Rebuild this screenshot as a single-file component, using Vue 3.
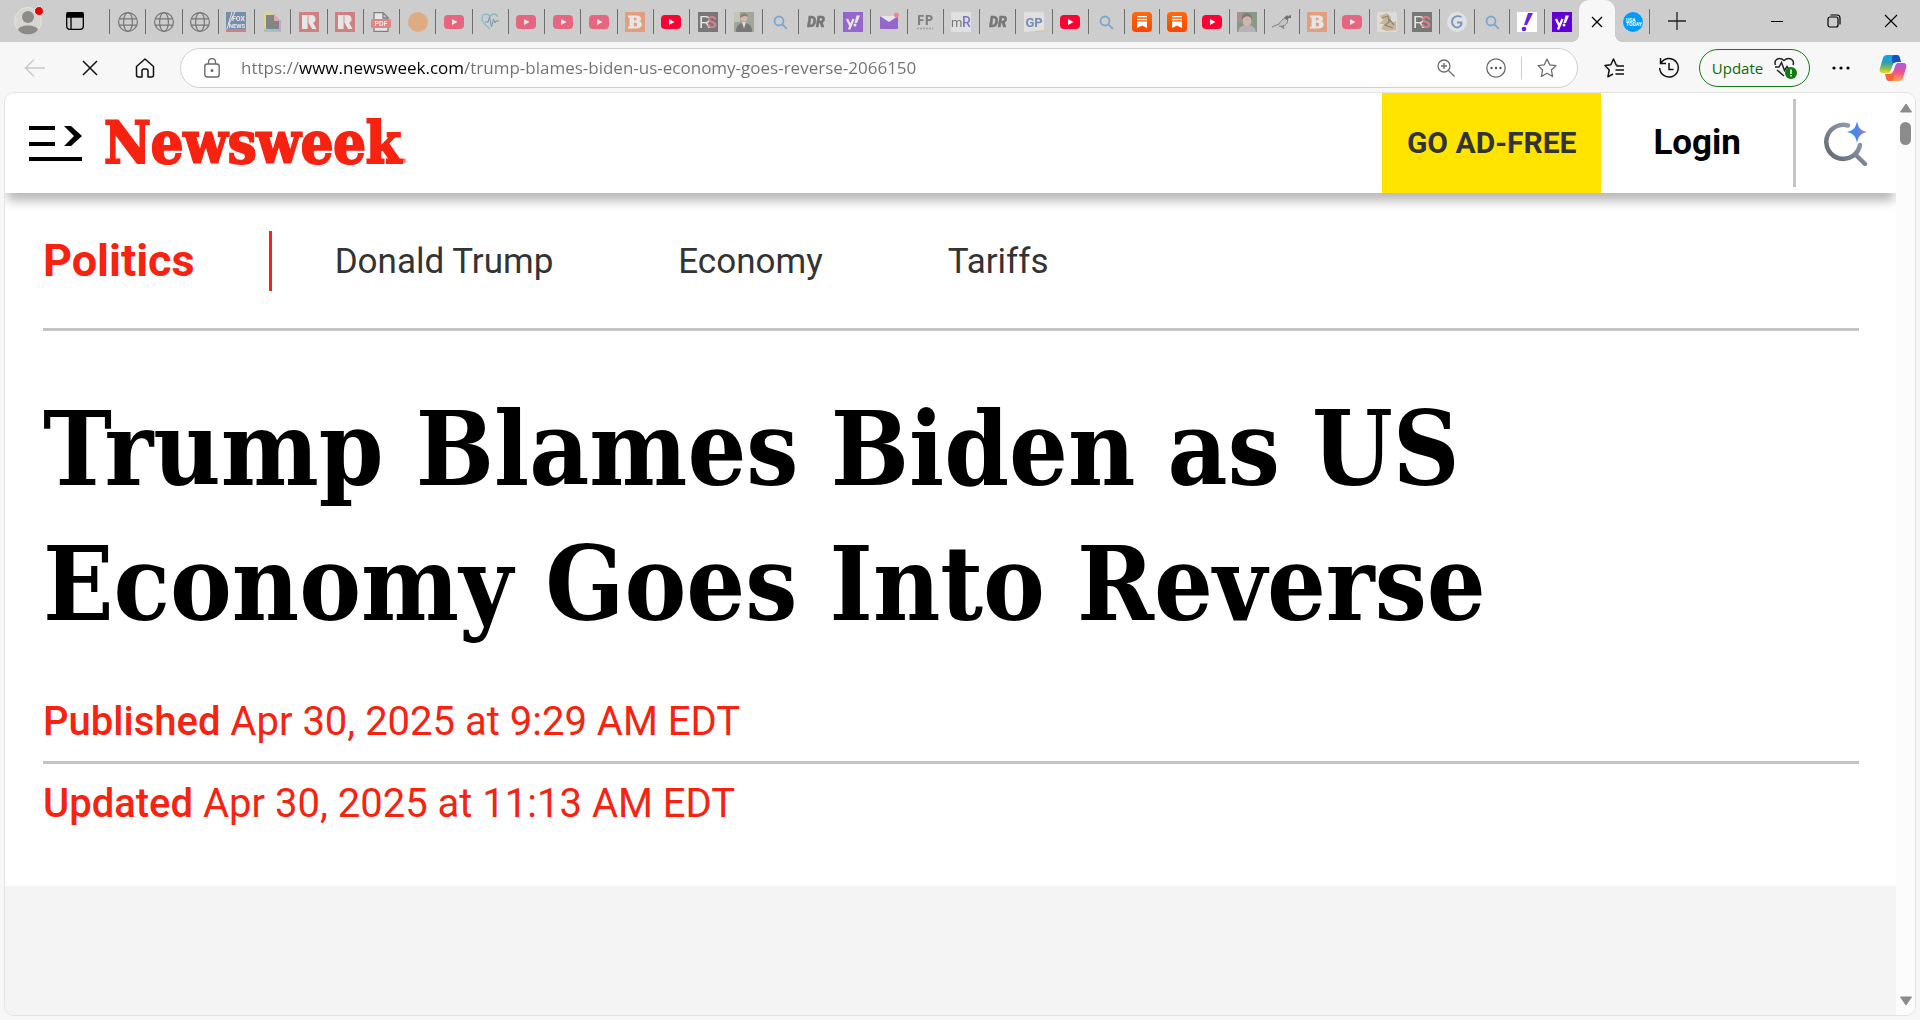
<template>
  <div class="browser">
    <!-- shared favicon shapes -->
    <svg class="sprite" aria-hidden="true">
      <defs>
        <linearGradient id="flame" x1="0" y1="0" x2="0" y2="1">
          <stop offset="0" stop-color="#ff6a0a" />
          <stop offset="1" stop-color="#fa4600" />
        </linearGradient>
        <symbol id="fav-globe" viewBox="0 0 20 20">
          <g fill="none" stroke="#222" stroke-width="1.2">
            <circle cx="10" cy="10" r="9.4" />
            <ellipse cx="10" cy="10" rx="4.4" ry="9.4" />
            <path d="M1.4 6.8h17.2M1.4 13.2h17.2" />
          </g>
        </symbol>
        <symbol id="fav-fox" viewBox="0 0 20 20">
          <path fill="#24508b" d="M0 0h20v20H0z" />
          <path fill="#d3343b" d="M0 17h20v3H0z" />
          <path d="M1 17L6 0M3 12L9 0" stroke="#fff" stroke-width="1" />
          <text x="12.5" y="9" font-size="7" font-weight="700" text-anchor="middle" fill="#fff">FOX</text>
          <text x="11" y="16" font-size="6" font-weight="700" text-anchor="middle" fill="#fff">NEWS</text>
        </symbol>
        <symbol id="fav-doc" viewBox="0 0 20 20">
          <path fill="#e6df70" d="M1 0h9v18H1z" />
          <path fill="#67bcd2" d="M1 17h17v3H1z" />
          <path fill="#b286c0" d="M15 8h3v11h-3z" />
          <path fill="#3d3d3d" d="M3 3h8l5 5v9H3z" />
          <path fill="#ed8791" d="M9 0l9 9h-7V3z" />
        </symbol>
        <symbol id="fav-realtor" viewBox="0 0 20 20">
          <path fill="#d2353b" d="M0 0h20v20H0z" />
          <path fill="#fff" d="M3 3h5.6v14H3zM9.4 3H12c3 0 4.6 1.5 4.6 4.2 0 2-1 3-2.4 3.600L17.500 17h-4.300L9.400 10.500z" />
        </symbol>
        <symbol id="fav-pdf" viewBox="0 0 20 20">
          <path d="M3 .7h9l5 5v13.600H3zM12 1v5h5" fill="#fff" stroke="#333" stroke-width="1.3" />
          <rect y="7" width="20" height="9" rx="1.5" fill="#ee3f43" />
          <text x="10" y="14" font-size="7" font-weight="700" text-anchor="middle" fill="#fff">PDF</text>
        </symbol>
        <symbol id="fav-orange" viewBox="0 0 20 20">
          <circle cx="10" cy="10" r="10" fill="#f18a3b" />
        </symbol>
        <symbol id="fav-youtube" viewBox="0 0 20 20">
          <rect y="3" width="20" height="14" rx="4" fill="#ff0033" />
          <path fill="#fff" d="M8 7l5.5 3L8 13z" />
        </symbol>
        <symbol id="fav-heart" viewBox="0 0 20 20">
          <path d="M10 17C5 13 2 10 2 6.5 2 1.5 8 .5 10 5c2-4.5 7-3.5 7.5 0" fill="none" stroke="#35aec9" stroke-width="1.3" />
          <path d="M5 10h3l1.5-5 2 10 2-8 1.5 4 1-2h3" fill="none" stroke="#2d5a80" stroke-width="1" />
        </symbol>
        <symbol id="fav-breitbart" viewBox="0 0 20 20">
          <path fill="#f9732f" d="M0 0h20v20H0z" />
          <text x="10" y="16" font-size="17" font-weight="700" font-family="DejaVu Serif, serif" text-anchor="middle" fill="#fff" stroke="#fff">B</text>
        </symbol>
        <symbol id="fav-rs" viewBox="0 0 20 20">
          <path fill="#242424" d="M0 0h20v20H0z" />
          <text x="1" y="16" font-size="17" fill="#fff" font-family="Liberation Sans, sans-serif">R</text>
          <text x="9" y="16" font-size="16" font-weight="700" fill="#e5384c">S</text>
        </symbol>
        <symbol id="fav-suit" viewBox="0 0 20 20">
          <path fill="#758363" d="M0 0h20v20H0z" />
          <path fill="#b9bfa5" d="M0 0h6v10H0z" />
          <path fill="#22262e" d="M2 20c0-6 3-9 8-9s8 3 8 9z" />
          <path fill="#e8e8e8" d="M8 10h4l-2 7z" />
          <circle cx="10" cy="6" r="3.5" fill="#d5a68d" />
          <path fill="#4a3a2c" d="M6 6c0-6 8-6 8-1-3-2-5-1-8 1z" />
        </symbol>
        <symbol id="fav-search" viewBox="0 0 20 20">
          <g fill="none" stroke="#2b82d2" stroke-width="1.8" stroke-linecap="round">
            <circle cx="9" cy="9" r="4.5" />
            <path d="M12.4 12.4l4 4" />
          </g>
        </symbol>
        <symbol id="fav-drudge" viewBox="0 0 20 20">
          <text x="10" y="15" font-size="14" font-weight="900" font-style="italic" text-anchor="middle" fill="#222" stroke="#222" stroke-width=".5">DR</text>
        </symbol>
        <symbol id="fav-yahoo" viewBox="0 0 20 20">
          <path fill="#6001d2" d="M0 0h20v20H0z" />
          <path d="M4 7l3.2 6.5M10.5 7L6 17.5" stroke="#fff" stroke-width="2.3" />
          <path fill="#fff" d="M13.5 3.5H17L14 11h-2.500z" />
          <circle cx="12" cy="13" r="1.5" fill="#fff" />
        </symbol>
        <symbol id="fav-mail" viewBox="0 0 20 20">
          <rect x="1" y="4" width="18" height="13" rx="1" fill="#6001d2" />
          <path d="M1 4l9 6 9-6" fill="#fff" />
          <circle cx="17.5" cy="3" r="2.5" fill="#ff4b4b" />
        </symbol>
        <symbol id="fav-fp" viewBox="0 0 20 20">
          <text x="10" y="13" font-size="14" font-weight="700" font-family="Open Sans, sans-serif" text-anchor="middle" fill="#333">FP</text>
          <path d="M2 16.5h16" stroke="#777" stroke-width="1.5" stroke-dasharray="2 1" />
        </symbol>
        <symbol id="fav-mr" viewBox="0 0 20 20">
          <path fill="#f4f4f4" d="M0 0h20v20H0z" />
          <text x="0" y="15" font-size="13" fill="#222">m</text>
          <text x="11" y="15" font-size="14" font-weight="500" fill="#2e21b8">R</text>
        </symbol>
        <symbol id="fav-gp" viewBox="0 0 20 20">
          <path fill="#f4f4f4" d="M0 0h20v20H0z" />
          <path fill="#eebd55" d="M3 20l17-2v2z" />
          <text x="10" y="15" font-size="13" font-weight="700" text-anchor="middle" fill="#244d9d">GP</text>
        </symbol>
        <symbol id="fav-substack" viewBox="0 0 20 20">
          <rect width="20" height="20" rx="4" fill="url(#flame)" />
          <path d="M5 4.7h10M5 7.5h10" stroke="#fff" stroke-width="1.3" />
          <path fill="#fff" d="M5 9.500h10V16l-5-2.600L5 16z" />
        </symbol>
        <symbol id="fav-portrait" viewBox="0 0 20 20">
          <path fill="#456745" d="M0 0h20v20H0z" />
          <path fill="#96504a" d="M0 0h5v10H0z" />
          <path fill="#a696a5" d="M1 20c1-5 4-7 9-7s8 2 9 7z" />
          <ellipse cx="10" cy="8.5" rx="4.5" ry="6" fill="#d69c86" />
          <path fill="#33261f" d="M5 8c-1-9 11-9 10 0-1-5-8-5-10 0z" />
        </symbol>
        <symbol id="fav-bird" viewBox="0 0 20 20">
          <path d="M0 15l7-3c2-3 4-6 7-6 2 0 2 3 1 5-2 3-5 4-8 3M8 14l3 2M11 13l1 4" fill="#bbb" stroke="#333" stroke-width="1" />
          <path fill="#111" d="M12 6l3-3 2 3-2 2zM16 4l3-1v3h-2z" />
        </symbol>
        <symbol id="fav-paper" viewBox="0 0 20 20">
          <path fill="#f0ece3" d="M0 0h20v20H0z" />
          <path fill="#c7a063" d="M3 4l7-3 4 4v6l5-2v9l-9 1-6-2 3-5H2l4-4z" />
          <path d="M5 6l6-2 1 6-4 3 8 3M12 7l5 6" fill="none" stroke="#4a4335" stroke-width="1.3" />
        </symbol>
        <symbol id="fav-g" viewBox="0 0 20 20">
          <circle cx="10" cy="10" r="10" fill="#f5f6f9" />
          <path d="M14.5 5C9 2.5 5 6 5 10s4 6.5 7 5c2-1 2.5-2.5 2.5-4.5H10" fill="none" stroke="#315fae" stroke-width="1.9" />
        </symbol>
        <symbol id="fav-bang" viewBox="0 0 20 20">
          <path fill="#fff" d="M0 0h20v20H0z" />
          <path fill="#6920ed" d="M11 1h5l-6 12H7z" />
          <circle cx="7" cy="17" r="2.3" fill="#6920ed" />
        </symbol>
        <symbol id="fav-usa" viewBox="0 0 20 20">
          <circle cx="10" cy="10" r="10" fill="#009bff" />
          <text x="3" y="9.5" font-size="5" font-weight="700" fill="#fff">USA</text>
          <text x="3" y="14" font-size="5" font-weight="700" fill="#fff">TODAY</text>
        </symbol>
      </defs>
    </svg>

    <header class="tab-strip">
      <div class="strip-left">
        <button class="profile" aria-label="Profile">
          <svg width="28" height="28" viewBox="0 0 28 28">
            <circle cx="14" cy="14" r="13.5" fill="#d6d5d2" stroke="#e2e2e0" />
            <circle cx="14" cy="10" r="6" fill="#8d8b88" />
            <path d="M4 23c1-6 19-6 20 0-5 6-15 6-20 0z" fill="#8d8b88" />
          </svg>
          <span class="alert-dot"></span>
        </button>
        <button class="tab-actions" aria-label="Tab actions">
          <svg width="18" height="18" viewBox="0 0 18 18" fill="none" stroke="#000" stroke-width="1.3">
            <rect x=".7" y=".7" width="16.6" height="16.6" rx="3" />
            <path d="M1 1h16v4H1z" fill="#000" />
            <path d="M5 5v12" />
          </svg>
        </button>
      </div>

      <nav class="tabs" aria-label="Tabs">
        <button v-for="(tab, i) in tabs" :key="i" class="tab" :class="{ asleep: tab.asleep }" :aria-label="tab.icon">
          <svg class="favicon"><use :href="'#fav-' + tab.icon" /></svg>
        </button>
      </nav>
      <nav class="tabs recent" aria-label="Recent tabs">
        <button
          v-for="(tab, i) in recentTabs"
          :key="i"
          class="tab"
          :class="{ asleep: tab.asleep }"
          :aria-label="tab.icon"
        >
          <svg class="favicon"><use :href="'#fav-' + tab.icon" /></svg>
        </button>
      </nav>
      <button class="tab-active" aria-label="Close tab">
        <svg width="12" height="12" viewBox="0 0 12 12" stroke="#000" stroke-width="1.3">
          <path d="M1 1l10 10M11 1L1 11" />
        </svg>
      </button>
      <button class="tab last" aria-label="usa">
        <svg class="favicon"><use href="#fav-usa" /></svg>
      </button>

      <button class="new-tab" aria-label="New tab">
        <svg width="18" height="18" viewBox="0 0 18 18" stroke="#222" stroke-width="1.3"><path d="M9 0v18M0 9h18" /></svg>
      </button>
      <div class="window-buttons">
        <button aria-label="Minimize">
          <svg width="14" height="14" viewBox="0 0 14 14" stroke="#000"><path d="M1 7.5h12" /></svg>
        </button>
        <button aria-label="Restore">
          <svg width="14" height="14" viewBox="0 0 14 14" fill="none" stroke="#000" stroke-width="1.2">
            <rect x="1" y="3" width="10" height="10" rx="2" />
            <path d="M3.5 1H10a3 3 0 0 1 3 3v6.5" />
          </svg>
        </button>
        <button aria-label="Close">
          <svg width="14" height="14" viewBox="0 0 14 14" stroke="#000" stroke-width="1.1"><path d="M1 1l12 12M13 1L1 13" /></svg>
        </button>
      </div>
    </header>

    <div class="toolbar">
      <button class="tool" aria-label="Back">
        <svg width="22" height="20" viewBox="0 0 22 20" fill="none" stroke="#c9c9c9" stroke-width="1.5">
          <path d="M21 10H2M10 1.5L1.5 10l8.5 8.5" />
        </svg>
      </button>
      <button class="tool" aria-label="Stop">
        <svg width="16" height="16" viewBox="0 0 16 16" stroke="#111" stroke-width="1.5"><path d="M1 1l14 14M15 1L1 15" /></svg>
      </button>
      <button class="tool" aria-label="Home">
        <svg width="20" height="20" viewBox="0 0 20 20" fill="none" stroke="#111" stroke-width="1.5" stroke-linejoin="round">
          <path d="M1.5 8.5L10 1l8.5 7.5V17a2 2 0 0 1-2 2H13v-6a2 2 0 0 0-2-2H9a2 2 0 0 0-2 2v6H3.5a2 2 0 0 1-2-2z" />
        </svg>
      </button>

      <form class="address" @submit.prevent>
        <svg width="16" height="20" viewBox="0 0 16 20" fill="none" stroke="#6b6b6b" stroke-width="1.4">
          <rect x=".8" y="6" width="14.4" height="13" rx="2.5" />
          <path d="M4.5 6V4a3.5 3.5 0 0 1 7 0v2" />
          <circle cx="8" cy="12.5" r=".8" fill="#555" />
        </svg>
        <input v-model="url" class="url" aria-label="Address" spellcheck="false" />
        <button class="in-address" type="button" aria-label="Zoom">
          <svg width="18" height="18" viewBox="0 0 18 18" fill="none" stroke="#6b6b6b" stroke-width="1.3">
            <circle cx="7" cy="7" r="6" />
            <path d="M11.5 11.5l6 6M4 7h6M7 4v6" />
          </svg>
        </button>
        <button class="in-address" type="button" aria-label="More in address bar">
          <svg width="20" height="20" viewBox="0 0 20 20" fill="none" stroke="#6b6b6b" stroke-width="1.3">
            <circle cx="10" cy="10" r="9.2" />
            <g fill="#555" stroke="none">
              <circle cx="5.5" cy="10" r="1.2" /><circle cx="10" cy="10" r="1.2" /><circle cx="14.5" cy="10" r="1.2" />
            </g>
          </svg>
        </button>
        <span class="address-sep"></span>
        <button class="in-address" type="button" aria-label="Add to favorites">
          <svg width="20" height="20" viewBox="0 0 20 20" fill="none" stroke="#6b6b6b" stroke-width="1.3" stroke-linejoin="round">
            <path d="M10 1l2.7 5.8 6.3.8-4.6 4.4 1.2 6.5L10 15.3l-5.6 3.2L5.6 12 1 7.6l6.3-.8z" />
          </svg>
        </button>
      </form>

      <button class="tool favorites" aria-label="Favorites">
        <svg width="20" height="20" viewBox="0 0 20 20" fill="none" stroke="#111" stroke-width="1.5" stroke-linejoin="round">
          <path d="M13.5 7.3l-1.3-.3L9.5 1 6.8 6.8 1 7.6 5.2 12l-1.3 6.8L9 16" />
          <path d="M12.5 8H20M11.5 12H20M11.5 16H20" />
        </svg>
      </button>
      <button class="tool" aria-label="History">
        <svg width="22" height="22" viewBox="0 0 22 22" fill="none" stroke="#111" stroke-width="1.5">
          <path d="M3 6a9.3 9.3 0 1 1-1.3 5M2.5 1v5.5H8M11 6v6.5h4.5" />
        </svg>
      </button>
      <button class="update">
        <span>Update</span>
        <svg width="24" height="24" viewBox="0 0 24 24" fill="none" stroke="#222" stroke-width="1.5">
          <path d="M2.5 9C.5 4 6 0 11 4.5 16 0 22 4 20 9M4 14l7 6" />
          <path d="M2 11h4l2.5-4.5 3 8 2.5-4 1.5 2h2" />
          <circle cx="18" cy="17" r="6" fill="#107c10" stroke="none" />
          <path d="M18 13.5V18M18 19v1.5" stroke="#fff" />
        </svg>
      </button>
      <button class="tool" aria-label="Settings and more">
        <svg width="18" height="4" viewBox="0 0 18 4"><circle cx="2" cy="2" r="1.6" /><circle cx="9" cy="2" r="1.6" /><circle cx="16" cy="2" r="1.6" /></svg>
      </button>
      <button class="copilot" aria-label="Copilot">
        <svg width="28" height="28" viewBox="0 0 28 28">
          <defs>
            <linearGradient id="cp-left" x1="0" y1="0" x2="0" y2="1">
              <stop offset="0" stop-color="#12a0ee" /><stop offset=".45" stop-color="#2c9fb0" /><stop offset=".75" stop-color="#8cc04a" /><stop offset="1" stop-color="#ffd02e" />
            </linearGradient>
            <linearGradient id="cp-right" x1="0" y1="0" x2="0" y2="1">
              <stop offset="0" stop-color="#a05cec" /><stop offset=".5" stop-color="#f0508c" /><stop offset="1" stop-color="#ffa252" />
            </linearGradient>
          </defs>
          <path d="M8 1h10l-2 3-4 12c-.6 2-1.5 3-3 3H4c-3 0-4-2-3-5L4 4c.5-2 2-3 4-3z" fill="url(#cp-left)" />
          <path d="M15 1h3c2 0 2.5 1 3 3l1 4h-4c-2 0-3 1-4 3l-1-6c0-2 .5-3.3 2-4z" fill="#174fc4" />
          <path d="M20 27H10l2-3 4-12c.6-2 1.5-3 3-3h5c3 0 4 2 3 5l-3 10c-.5 2-2 3-4 3z" fill="url(#cp-right)" />
          <path d="M13 27h-3c-2 0-2.5-1-3-3l-1-4h4c2 0 3-1 4-3l1 6c0 2-.5 3.3-2 4z" fill="#f4673a" />
          <path d="M14.5 9H18c-1.5 1-2 2.5-2.500 4L14 17c-.5 1.5-1 2.5-4 2.5 1.5-.5 2-2 2.5-3.5L14 11z" fill="#fff" />
        </svg>
      </button>
    </div>

    <div class="viewport">
      <div class="page">
        <div class="site-header">
          <button class="menu" aria-label="Menu">
            <svg width="53" height="36" viewBox="0 0 53 36" fill="#000">
              <path d="M0 1h26v4H0zM0 17h26v4H0zM0 32h53v4H0z" />
              <path d="M35 1h7l11 10-11 10h-7l10-10z" />
            </svg>
          </button>
          <a class="logo" href="#">Newsweek<sup>®</sup></a>
          <a class="ad-free" href="#">GO AD-FREE</a>
          <a class="login" href="#">Login</a>
          <button class="site-search" aria-label="Search">
            <svg width="44" height="46" viewBox="0 0 44 46" fill="none" stroke-linecap="round">
              <defs>
                <linearGradient id="lens" x1="0" y1="1" x2="1" y2="0">
                  <stop offset="0" stop-color="#59616b" /><stop offset="1" stop-color="#a0aac0" />
                </linearGradient>
                <linearGradient id="spark" x1="0" y1="0" x2="1" y2="0">
                  <stop offset="0" stop-color="#2d9bf5" /><stop offset=".5" stop-color="#4f83e6" /><stop offset="1" stop-color="#c673c8" />
                </linearGradient>
              </defs>
              <path d="M24 5.500A17 17 0 1 0 36 25M32 35l9 9" stroke="url(#lens)" stroke-width="4.5" />
              <path d="M33 1c1.5 7 3 9 10 11-7 2-8.5 4-10 11-1.5-7-3-9-10-11 7-2 8.5-4 10-11z" fill="url(#spark)" />
            </svg>
          </button>
        </div>

        <main class="article">
          <nav class="topics">
            <a class="section" href="#">Politics</a>
            <a v-for="topic in topics" :key="topic" class="topic" href="#">{{ topic }}</a>
          </nav>
          <h1>Trump Blames Biden as US Economy Goes Into Reverse</h1>
          <p class="date"><strong>Published</strong> Apr 30, 2025 at 9:29 AM EDT</p>
          <p class="date updated"><strong>Updated</strong> Apr 30, 2025 at 11:13 AM EDT</p>
        </main>
        <div class="media-slot"></div>
      </div>

      <div class="scrollbar" aria-hidden="true">
        <svg width="14" height="10" viewBox="0 0 14 10"><path d="M7 1l5.5 8h-11z" fill="#8b8b8b" stroke="#8b8b8b" stroke-linejoin="round" /></svg>
        <span class="thumb"></span>
        <svg class="down" width="14" height="10" viewBox="0 0 14 10"><path d="M7 9L1.5 1h11z" fill="#8b8b8b" stroke="#8b8b8b" stroke-linejoin="round" /></svg>
      </div>
    </div>
  </div>
</template>

<script setup>
import { ref } from "vue";

const url = ref("https://www.newsweek.com/trump-blames-biden-us-economy-goes-reverse-2066150");

const topics = ["Donald Trump", "Economy", "Tariffs"];

// "!" marks a tab that is awake, the others are drawn faded
const toTabs = (names) =>
  names.split(" ").map((name) => ({
    icon: name.replace("!", ""),
    asleep: !name.endsWith("!"),
  }));

const tabs = toTabs(
  "globe globe globe fox doc realtor realtor pdf orange youtube heart youtube youtube youtube " +
    "breitbart youtube! rs suit search drudge yahoo mail fp mr drudge gp youtube! search"
);

const recentTabs = toTabs(
  "substack! substack! youtube! portrait bird breitbart youtube paper rs g search bang! yahoo!"
);
</script>

<style>
body {
  background: #f7f7f7;
}
</style>

<style scoped>
.browser {
  display: flex;
  flex-direction: column;
  min-height: 100vh;
  box-sizing: border-box;
  padding-bottom: 4px;
  background: #f7f7f7;
  font-family: Roboto, "Liberation Sans", sans-serif;
}

.sprite {
  position: absolute;
  width: 0;
  height: 0;
}

button {
  display: flex;
  align-items: center;
  justify-content: center;
  padding: 0;
  border: 0;
  background: none;
  cursor: pointer;
}

svg {
  display: block;
  flex-shrink: 0;
}

a {
  text-decoration: none;
}

/* tab strip */
.tab-strip {
  display: flex;
  height: 42px;
  padding-right: 1px;
  background: #cdcdcd;
}

.strip-left {
  display: flex;
  align-items: center;
  gap: 24px;
  width: 95px;
  padding-left: 14px;
}

.profile {
  position: relative;
}

.alert-dot {
  position: absolute;
  top: -1px;
  right: -2px;
  width: 8px;
  height: 8px;
  border: 1px solid #e8e8e8;
  border-radius: 50%;
  background: #e60000;
}

.tabs {
  display: flex;
  flex: 1;
}

.tabs.recent {
  flex: none;
}

.tab {
  position: relative;
  flex: 1;
  padding: 2px 0 0 1px;
}

.recent .tab,
.tab.last {
  flex: none;
  width: 35px;
}

.tab::before {
  content: "";
  position: absolute;
  left: 0;
  top: 9px;
  width: 1px;
  height: 25px;
  background: #6e6e6e;
}

.tab.last::before {
  left: auto;
  right: 0;
}

.favicon {
  width: 20px;
  height: 20px;
  font-family: Roboto, sans-serif;
}

.asleep .favicon {
  opacity: 0.5;
}

.tab-active {
  position: relative;
  width: 36px;
  padding-top: 2px;
  border-radius: 10px 10px 0 0;
  background: #f7f7f7;
}

.tab-active::before,
.tab-active::after {
  content: "";
  position: absolute;
  bottom: 0;
  width: 8px;
  height: 8px;
}

.tab-active::before {
  right: 100%;
  background: radial-gradient(circle at 0 0, transparent 8px, #f7f7f7 8px);
}

.tab-active::after {
  left: 100%;
  background: radial-gradient(circle at 100% 0, transparent 8px, #f7f7f7 8px);
}

.new-tab {
  width: 54px;
}

.window-buttons {
  display: flex;
  margin-left: 44px;
}

.window-buttons button {
  width: 57px;
}

/* toolbar */
.toolbar {
  display: flex;
  align-items: center;
  height: 50px;
  padding: 2px 2px 0 7px;
  box-sizing: border-box;
}

.tool {
  width: 55px;
  height: 40px;
}

.address {
  display: flex;
  flex: 1;
  align-items: center;
  height: 40px;
  margin-left: 8px;
  padding: 0 5px 0 23px;
  box-sizing: border-box;
  border: 1px solid #cfcfcf;
  border-radius: 20px;
  background: #fff;
}

.url {
  flex: 1;
  min-width: 0;
  margin-left: 21px;
  padding: 0;
  border: 0;
  outline: 0;
  font: 17px/24px "Open Sans", "Noto Sans", sans-serif;
  color: #707070;
  /* the host part of the address is darker than the rest */
  background: linear-gradient(90deg, #707070 58px, #000 58px, #000 222px, #707070 222px);
  -webkit-background-clip: text;
  background-clip: text;
  -webkit-text-fill-color: transparent;
}

.in-address {
  width: 50px;
  height: 36px;
}

.address-sep {
  width: 1px;
  height: 22px;
  background: #cfcfcf;
}

.favorites {
  margin-left: 8px;
}

.update {
  gap: 10px;
  width: 111px;
  height: 38px;
  margin: 0 3px;
  border: 1px solid #107c10;
  border-radius: 19px;
  font: 500 15px/20px "Open Sans", "Noto Sans", sans-serif;
  color: #0b6a0b;
}

.copilot {
  width: 50px;
}

/* page */
.viewport {
  display: flex;
  flex: 1;
  margin: 0 4px;
  overflow: hidden;
  border: 1px solid #e3e3e3;
  border-radius: 10px;
  background: #fff;
}

.page {
  display: flex;
  flex: 1;
  flex-direction: column;
  overflow: hidden;
}

.site-header {
  display: flex;
  align-items: center;
  height: 100px;
  padding-left: 24px;
  background: #fff;
  box-shadow: 0 10px 10px -2px rgba(0, 0, 0, 0.28);
}

.logo {
  margin: 0 auto 0 22px;
  font: 700 57px/60px "DejaVu Serif Condensed", "DejaVu Serif", serif;
  -webkit-text-stroke: 2px #f72210;
  color: #f72210;
}

.logo sup {
  font-size: 6px;
  line-height: 1;
  vertical-align: baseline;
  -webkit-text-stroke: 0;
}

.ad-free {
  padding: 0 25px;
  background: #ffe400;
  font-size: 30px;
  font-weight: 700;
  line-height: 100px;
  color: #333;
}

.login {
  padding: 0 52px;
  font-size: 35px;
  font-weight: 700;
  line-height: 88px;
  border-right: 3px solid #c4c4c4;
  color: #000;
}

.site-search {
  width: 100px;
}

.article {
  padding: 38px 37px 43px 38px;
}

.topics {
  display: flex;
  align-items: center;
  gap: 125px;
  padding-bottom: 37px;
  border-bottom: 3px solid #c4c4c4;
}

.section {
  margin-right: -62px;
  padding-right: 74px;
  border-right: 3px solid #f72210;
  font-size: 45px;
  font-weight: 700;
  line-height: 60px;
  color: #f72210;
}

.topic {
  font-size: 35px;
  color: #333;
}

h1 {
  margin: 50px 0 31px;
  font: 700 103px/135px "DejaVu Serif Condensed", "DejaVu Serif", serif;
  color: #000;
}

.date {
  margin: 0;
  font-size: 40px;
  line-height: 79px;
  color: #f72210;
}

.date strong {
  font-weight: 500;
}

.updated {
  border-top: 3px solid #c4c4c4;
}

.media-slot {
  flex: 1;
  background: #f4f4f4;
}

.scrollbar {
  display: flex;
  flex-direction: column;
  align-items: center;
  width: 19px;
  padding: 10px 0 9px;
  box-sizing: border-box;
  background: #fcfcfc;
}

.thumb {
  width: 11px;
  height: 23px;
  margin-top: 9px;
  border-radius: 6px;
  background: #8b8b8b;
}

.down {
  margin-top: auto;
}
</style>
